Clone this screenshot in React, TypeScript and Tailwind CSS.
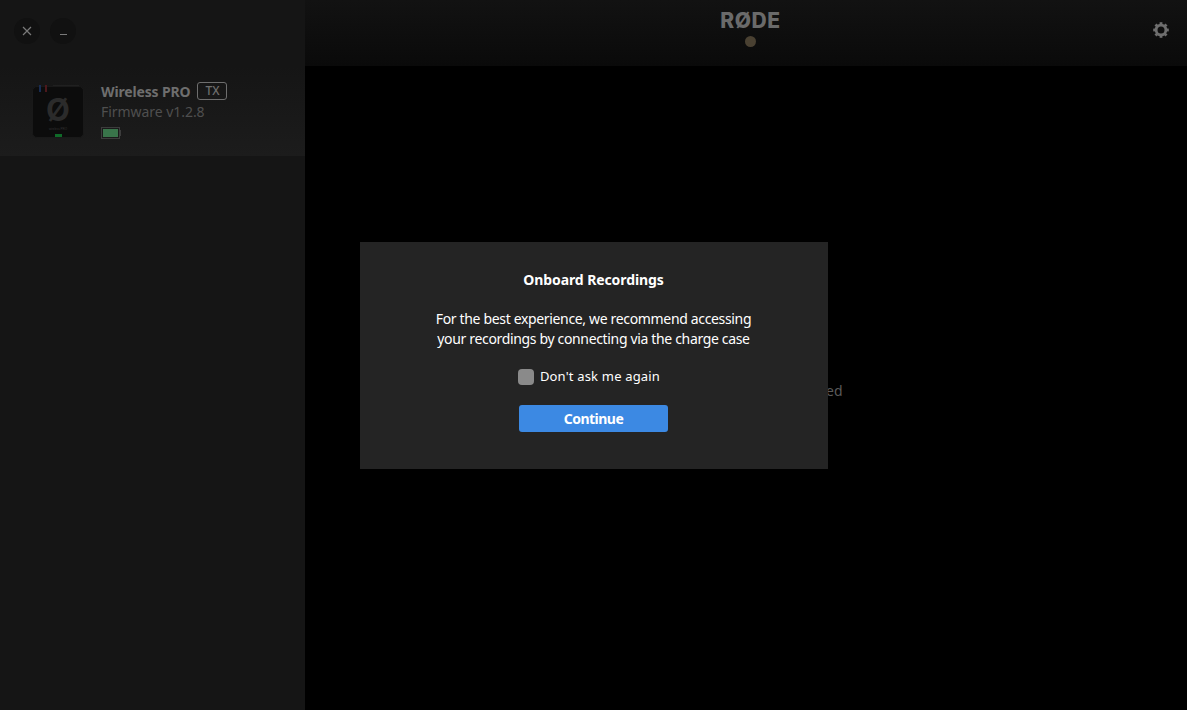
import React from "react"

function DeviceThumb() {
  return (
    <div className="relative w-[52px] h-[52px] shrink-0 rounded-[5px] bg-[#0c0c0c] border border-[#191919] flex flex-col items-center">
      <div className="absolute -top-[2px] left-[6px] w-[2px] h-[7px] bg-[#182c52]" />
      <div className="absolute -top-[2px] left-[12px] w-[2px] h-[7px] bg-[#4c181c]" />
      <div className="absolute -top-[2px] left-[20px] w-[26px] h-[1px] bg-[#202020]" />
      <span className="mt-[8px] text-[31px] leading-[30px] font-bold text-[#2b2b2b] font-['Inter',sans-serif]">Ø</span>
      <span className="mt-[2px] text-[3px] leading-[4px] text-[#333] font-['Liberation_Sans',sans-serif]">wireless PRO</span>
      <div className="absolute bottom-0 left-[22px] w-[7px] h-[3px] bg-[#0f6a28]" />
    </div>
  )
}

function GearIcon() {
  const angles = [0, 45, 90, 135, 180, 225, 270, 315]
  return (
    <svg width="16" height="16" viewBox="0 0 16 16" fill="#6e6e6e">
      <circle cx="8" cy="8" r="4.9" fill="none" stroke="#6e6e6e" strokeWidth="2.8" />
      {angles.map((a) => (
        <rect key={a} x="6.6" y="0.2" width="2.8" height="3" transform={`rotate(${a} 8 8)`} />
      ))}
    </svg>
  )
}

export default function App() {
  return (
    <div className="relative w-full h-screen overflow-hidden flex bg-black font-['Noto_Sans',sans-serif]">
      {/* sidebar */}
      <aside className="w-[305px] shrink-0 bg-[#151515] flex flex-col">
        <div className="h-[66px] flex items-center gap-[10px] pl-[14px] pb-[5px]">
          <button className="w-[26px] h-[26px] rounded-full bg-[#111111] flex items-center justify-center">
            <svg width="10" height="10" viewBox="0 0 10 10" stroke="#7a7a7a" strokeWidth="1.2" fill="none">
              <path d="M1 1l8 8M9 1l-8 8" />
            </svg>
          </button>
          <button className="w-[26px] h-[26px] rounded-full bg-[#111111] flex items-center justify-center">
            <div className="w-[7px] h-[1.5px] mt-[8px] bg-[#7a7a7a]" />
          </button>
        </div>
        <div className="h-[90px] flex items-start pl-[32px] pt-[20px] gap-[17px] bg-gradient-to-b from-[#151515] to-[#1c1c1c]">
          <DeviceThumb />
          <div className="flex flex-col -mt-[6px]">
            <div className="flex items-center gap-[7px] h-[22px]">
              <span className="text-[14px] font-bold tracking-[-0.15px] text-[#6e6e6e]">Wireless PRO</span>
              <span className="w-[30px] h-[18px] border border-[#6e6e6e] rounded-[3px] flex items-center justify-center text-[12px] font-medium text-[#6e6e6e]">TX</span>
            </div>
            <span className="text-[14px] leading-[20px] tracking-[-0.05px] text-[#4f4f4f]">Firmware v1.2.8</span>
            <div className="mt-[5px] flex items-center">
              <div className="w-[19px] h-[12px] border border-[#3c3c3c] p-[1px]">
                <div className="w-full h-full bg-[#39744a]" />
              </div>
              <div className="w-[1px] h-[6px] bg-[#3c3c3c]" />
            </div>
          </div>
        </div>
      </aside>

      {/* main */}
      <main className="flex-1 flex flex-col min-w-0">
        <header className="h-[66px] shrink-0 relative flex items-center justify-end pr-[18px] pb-[6px] bg-gradient-to-b from-[#121212] to-[#0a0a0a]">
          <div className="absolute left-[415px] top-[8px] w-[61px] flex flex-col items-center">
            <span className="text-[21px] leading-[26px] font-extrabold tracking-[0.6px] whitespace-nowrap text-[#6a6a6a] font-['Inter',sans-serif]">RØDE</span>
            <div className="mt-[2px] w-[11px] h-[11px] rounded-full bg-[#4a4132]" />
          </div>
          <GearIcon />
        </header>
        <div className="flex-1 flex items-center justify-center">
          <p className="text-[14px] text-[#5a5a5a] mt-[4px]">Your device is now connected</p>
        </div>
      </main>

      {/* dialog */}
      <div className="absolute inset-0 flex items-center justify-center">
        <div className="w-[468px] h-[227px] bg-[#242424] flex flex-col items-center text-white pt-[27px]">
          <h2 className="text-[14px] leading-[22px] font-bold tracking-[-0.1px]">Onboard Recordings</h2>
          <p className="mt-[18px] text-[14px] leading-[20px] tracking-[-0.34px] text-center">
            For the best experience, we recommend accessing
            <br />
            your recordings by connecting via the charge case
          </p>
          <label className="mt-[19px] mr-[9px] flex items-center gap-[6px] h-[18px]">
            <span className="w-[16px] h-[16px] rounded-[4px] bg-[#8a8a8a]" />
            <span className="text-[13px] tracking-[0.18px]">Don't ask me again</span>
          </label>
          <button className="mt-[19px] w-[149px] h-[27px] rounded-[3px] bg-[#3c89e3] text-[14px] font-bold tracking-[-0.5px] text-white">
            Continue
          </button>
        </div>
      </div>
    </div>
  )
}
